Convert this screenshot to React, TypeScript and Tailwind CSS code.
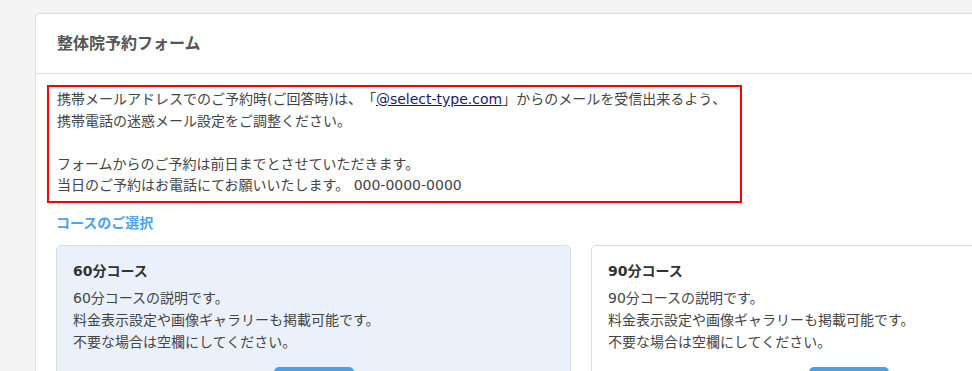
import React from "react";

const courses = [
  { name: "60分コース", desc: "60分コースの説明です。", active: true },
  { name: "90分コース", desc: "90分コースの説明です。", active: false },
];

export default function App() {
  return (
    <div
      className="h-screen w-full overflow-hidden bg-[#f4f4f4] pl-[35px] pt-[13px] text-[#444] [text-spacing-trim:space-all]"
      style={{ fontFamily: '"DejaVu Sans", "Noto Sans CJK JP", sans-serif' }}
    >
      <div className="w-[1092px] rounded-[5px] border border-[#dedede] bg-white">
        {/* Header */}
        <div className="flex h-[60px] items-center border-b border-[#dedede] px-[21px]">
          <h1 className="text-[16px] font-bold text-[#555]">整体院予約フォーム</h1>
        </div>

        {/* Body */}
        <div className="px-[11px] pt-[11px]">
          <div className="w-[695px] border-2 border-[#ff0000] px-[8px] pb-[4px] pt-[2px] text-[14px] leading-[21.5px] text-[#444]">
            <p>
              携帯メールアドレスでのご予約時(ご回答時)は、「
              <a href="#" className="text-[#1a1a6e] underline">
                @select-type.com
              </a>
              」からのメールを受信出来るよう、
            </p>
            <p>携帯電話の迷惑メール設定をご調整ください。</p>
            <p>&nbsp;</p>
            <p>フォームからのご予約は前日までとさせていただきます。</p>
            <p>当日のご予約はお電話にてお願いいたします。 000-0000-0000</p>
          </div>

          <div className="px-[9px]">
            <h2 className="mt-[10px] text-[14px] font-bold leading-[20px] text-[#4da3e8]">
              コースのご選択
            </h2>

            <div className="mt-[12px] grid grid-cols-2 gap-[20px]">
              {courses.map((c) => (
                <div
                  key={c.name}
                  className={`rounded-[5px] border border-[#dcdcdc] px-[16px] pt-[14px] ${
                    c.active ? "bg-[#ebf1fb]" : "bg-white"
                  }`}
                >
                  <h3 className="text-[14px] font-bold leading-[22px] text-[#333]">{c.name}</h3>
                  <div className="mt-[5px] text-[14px] leading-[22px] text-[#444]">
                    <p>{c.desc}</p>
                    <p>料金表示設定や画像ギャラリーも掲載可能です。</p>
                    <p>不要な場合は空欄にしてください。</p>
                  </div>
                  <div className="mt-[14px] flex justify-center pb-[14px]">
                    <button className="h-[34px] w-[80px] rounded-[5px] bg-[#4aa0e6] text-[14px] text-white">
                      選択
                    </button>
                  </div>
                </div>
              ))}
            </div>
          </div>
        </div>
      </div>
    </div>
  );
}
